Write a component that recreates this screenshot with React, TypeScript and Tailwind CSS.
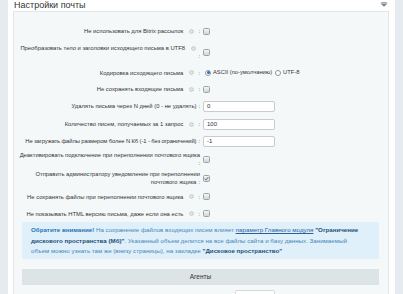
import React from "react";

const font = { fontFamily: '"Liberation Sans", Arial, sans-serif' };

function Help() {
  return (
    <svg width="5" height="5" viewBox="0 0 10 10" className="shrink-0">
      <circle cx="5" cy="5" r="4.6" fill="#c3c9cd" />
      <circle cx="5" cy="5" r="2.6" fill="#e6e9eb" />
    </svg>
  );
}

function Checkbox({ checked = false }: { checked?: boolean }) {
  return (
    <div className="w-[7px] h-[7px] rounded-[1.5px] border border-[#9aa3a8] bg-gradient-to-b from-[#f4f6f7] to-[#cfd5d8] flex items-center justify-center">
      {checked && (
        <svg width="5" height="5" viewBox="0 0 10 10">
          <path d="M1.5 5.2 L4 7.8 L8.7 2" fill="none" stroke="#4b5257" strokeWidth="1.6" />
        </svg>
      )}
    </div>
  );
}

function Radio({ checked = false }: { checked?: boolean }) {
  return (
    <div className="w-[6px] h-[6px] rounded-full border border-[#8d969b] bg-white flex items-center justify-center">
      {checked && <div className="w-[3px] h-[3px] rounded-full bg-[#2a6fc1]" />}
    </div>
  );
}

function TextBox({ value }: { value: string }) {
  return (
    <div className="w-[72px] h-[11px] rounded-[2px] border border-[#c6ccd0] bg-white px-[3px] text-[6px] leading-[9px] text-[#333]">
      {value}
    </div>
  );
}

type Line = { text: string; help?: boolean; colon?: boolean; pad?: boolean; tight?: boolean };

function Label({ lines }: { lines: Line[] }) {
  return (
    <div className="w-[186px] shrink-0 flex flex-col items-end text-[5.85px] leading-[8px] text-[#333]">
      {lines.map((l, i) => (
        <div key={i} className={"flex items-center justify-end whitespace-nowrap h-[8px]" + (l.pad ? " pr-[4px]" : "")}>
          <span className={l.tight ? "tracking-[-0.12px]" : ""}>{l.text}</span>
          {l.help && (
            <span className="ml-[6px]">
              <Help />
            </span>
          )}
          {l.colon && <span className={l.help ? "ml-[4px]" : "ml-[2px]"}>:</span>}
        </div>
      ))}
    </div>
  );
}

function Row({ h, lines, children }: { h: string; lines: Line[]; children: React.ReactNode }) {
  return (
    <div className={"flex items-center " + h}>
      <Label lines={lines} />
      <div className="ml-[3px] flex items-center">{children}</div>
    </div>
  );
}

export default function App() {
  return (
    <div className="w-[403px] h-[294px] overflow-hidden bg-[#e5ebee] flex px-[8px]" style={font}>
      <div className="flex-1 bg-white flex flex-col">
        <div className="h-[15px] flex items-start justify-between pl-[6px] pr-[7px]">
          <span className="text-[9px] leading-[11px] text-[#333]">Настройки почты</span>
          <svg width="8" height="5" viewBox="0 0 16 10" className="mt-[2px]">
            <rect x="2" y="0" width="12" height="1.5" fill="#8a9196" />
            <path d="M1 3 L15 3 L8 9.5 Z" fill="#7b8388" />
          </svg>
        </div>

        <div className="ml-[5px] mr-[6px] flex-1 border border-[#dfe5e8] bg-[#f5f8f9] pt-[9px]">
          <Row h="h-[20px]" lines={[{ text: "Не использовать для Bitrix рассылок", help: true, colon: true }]}>
            <Checkbox />
          </Row>
          <Row
            h="h-[22px]"
            lines={[
              { text: "Преобразовать тело и заголовки исходящего письма в UTF8", help: true, pad: true },
              { text: "", colon: true },
            ]}
          >
            <Checkbox />
          </Row>
          <Row h="h-[19px]" lines={[{ text: "Кодировка исходящего письма", help: true, colon: true }]}>
            <div className="flex items-center text-[5.8px] text-[#333] ml-[2px]">
              <Radio checked />
              <span className="ml-[2px]">ASCII (по-умолчанию)</span>
              <span className="ml-[3px]">
                <Radio />
              </span>
              <span className="ml-[2px]">UTF-8</span>
            </div>
          </Row>
          <Row h="h-[14px]" lines={[{ text: "Не сохранять входящие письма", help: true, colon: true }]}>
            <Checkbox />
          </Row>
          <Row h="h-[20px]" lines={[{ text: "Удалять письма через N дней (0 - не удалять)", colon: true }]}>
            <TextBox value="0" />
          </Row>
          <Row h="h-[16px]" lines={[{ text: "Количество писем, получаемых за 1 запрос", help: true, colon: true }]}>
            <TextBox value="100" />
          </Row>
          <Row h="h-[18px]" lines={[{ text: "Не загружать файлы размером более N Кб (-1 - без ограничений)", colon: true, tight: true }]}>
            <TextBox value="-1" />
          </Row>
          <Row
            h="h-[18px]"
            lines={[
              { text: "Деактивировать подключение при переполнении почтового ящика" },
              { text: "", colon: true },
            ]}
          >
            <Checkbox />
          </Row>
          <Row
            h="h-[20px]"
            lines={[
              { text: "Отправить администратору уведомление при переполнении" },
              { text: "почтового ящика", colon: true },
            ]}
          >
            <Checkbox checked />
          </Row>
          <Row h="h-[17px]" lines={[{ text: "Не сохранять файлы при переполнении почтового ящика", help: true, colon: true }]}>
            <Checkbox />
          </Row>
          <Row h="h-[17px]" lines={[{ text: "Не показывать HTML версию письма, даже если она есть", help: true, colon: true }]}>
            <Checkbox />
          </Row>

          <div className="ml-[8px] mr-[9px] h-[37px] bg-[#dff0fa] pt-[3px] pl-[9px] text-[6.2px] leading-[10.5px] text-[#4a86b6]">
            <div className="whitespace-nowrap">
              <b className="text-[#2672b2]">Обратите внимание!</b> На сохранение файлов входящих писем влияет{" "}
              <span className="underline text-[#2a5f9e]">параметр Главного модуля</span>{" "}
              <b className="text-[#1f4f78]">"Ограничение</b>
            </div>
            <div className="whitespace-nowrap">
              <b className="text-[#1f4f78]">дискового пространства (Мб)"</b>. Указанный объем делится на все файлы сайта и базу данных. Занимаемый
            </div>
            <div className="whitespace-nowrap">
              объем можно узнать там же (внизу страницы), на закладке{" "}
              <b className="text-[#1f4f78]">"Дисковое пространство"</b>
            </div>
          </div>

          <div className="ml-[8px] mr-[9px] mt-[10px] h-[16px] bg-[#dde4e6] flex items-center justify-center text-[6.5px] text-[#333]">
            Агенты
          </div>

          <div className="ml-[221px] mt-[5px] w-[40px] h-[8px] bg-white border border-[#d5dadd] rounded-t-[2px]" />
        </div>
      </div>
    </div>
  );
}
